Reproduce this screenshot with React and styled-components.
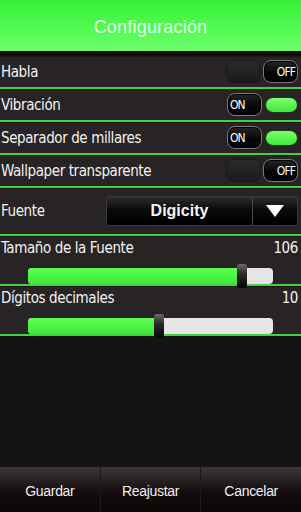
import React from 'react';
import styled, { createGlobalStyle } from 'styled-components';

const GlobalStyle = createGlobalStyle`
  html, body {
    margin: 0;
    padding: 0;
    background: #141414;
  }
  * {
    box-sizing: border-box;
  }
`

const Screen = styled.div`
  width: 301px;
  height: 512px;
  display: flex;
  flex-direction: column;
  background: #141414;
  font-family: "DejaVu Sans Condensed", "Liberation Sans", sans-serif;
  color: #fff;
  overflow: hidden;
`

const Header = styled.div`
  display: flex;
  align-items: center;
  justify-content: center;
  background: linear-gradient(#38f038, #5afb5a 70%, #70fc70);
  border-bottom: 5px solid #0c0c0c;
  height: 56px;
`

const Title = styled.div`
  font-family: "Liberation Sans", sans-serif;
  font-size: 18px;
  color: #e6ffe6;
  letter-spacing: 0.2px;
  padding-top: 3px;
`

const Row = styled.div`
  height: ${p => p.h}px;
  display: flex;
  align-items: ${p => (p.stack ? 'stretch' : 'center')};
  flex-direction: ${p => (p.stack ? 'column' : 'row')};
  justify-content: space-between;
  padding: 0 3px 0 1px;
  background: #282425;
  border-bottom: 2px solid #3fd43f;
  box-shadow: inset 0 1px 0 #1a1718;
`

const Label = styled.span`
  font-size: 15px;
  letter-spacing: -0.4px;
  color: #f2f2f2;
`

const Toggle = styled.div`
  display: flex;
  align-items: center;
  gap: 2px;
`

const Knob = styled.div`
  width: 35px;
  height: 23px;
  border-radius: 8px;
  background: linear-gradient(#262626, #050505 60%);
  border: 1.5px solid #7a7a7a;
  box-shadow: inset 0 0 0 1px #000;
  display: flex;
  align-items: center;
  justify-content: ${p => (p.on ? 'flex-start' : 'flex-end')};
  padding: 0 2px;
  font-size: 12px;
  letter-spacing: -0.9px;
  color: #fff;
`

const Dim = styled.div`
  width: 35px;
  height: 23px;
  border-radius: 8px;
  background: linear-gradient(#2c2a2a, #1c1a1a);
  border: 1px solid #1a1818;
`

const GreenPill = styled.div`
  width: 31px;
  height: 14px;
  margin: 0 1px 0 2px;
  border-radius: 7px;
  background: linear-gradient(#7bff6b, #3ee83a);
  box-shadow: 0 0 0 1px #1c3a1c;
`

const Select = styled.div`
  width: 192px;
  height: 30px;
  display: flex;
  background: linear-gradient(#2e2e2e, #0a0a0a 45%, #000);
  border: 1px solid #3a3a3a;
  border-radius: 2px;
`

const SelectText = styled.div`
  flex: 1;
  display: flex;
  align-items: center;
  justify-content: center;
  font-family: "Liberation Sans", sans-serif;
  font-weight: bold;
  font-size: 16px;
  color: #f4f4f4;
`

const SelectArrow = styled.div`
  width: 45px;
  display: flex;
  align-items: center;
  justify-content: center;
  border-left: 1px solid #4a4a4a;
`

const SliderHead = styled.div`
  display: flex;
  justify-content: space-between;
  align-items: center;
  height: 22px;
  margin-top: 1px;
`

const Track = styled.div`
  position: relative;
  margin: 5px 0 0 27px;
  width: 245px;
  height: 16px;
  border-radius: 4px;
  background: #e6e4e4;
`

const Fill = styled.div`
  height: 100%;
  border-radius: 4px 0 0 4px;
  background: linear-gradient(#5cff52, #3de83a);
`

const Thumb = styled.div`
  position: absolute;
  top: -4px;
  width: 10px;
  height: 24px;
  border-radius: 3px;
  background: linear-gradient(#6a6a6a, #2a2a2a 40%, #050505);
  transform: translateX(-5px);
`

const Spacer = styled.div`
  flex: 1;
`

const Footer = styled.div`
  height: 45px;
  display: flex;
  background: linear-gradient(#3d3738, #2a2526 25%, #150c0d 55%, #0e0708);
`

const FootButton = styled.div`
  flex: 1;
  display: flex;
  align-items: center;
  justify-content: center;
  padding-top: 3px;
  font-family: "Liberation Sans", sans-serif;
  font-size: 14px;
  letter-spacing: -0.3px;
  color: #f0f0f0;
  border-left: ${p => (p.first ? 'none' : '1px solid #201a1b')};
`

const ToggleSwitch = ({ on }) => (
  <Toggle>
    {on ? (
      <>
        <Knob on>ON</Knob>
        <GreenPill />
      </>
    ) : (
      <>
        <Dim />
        <Knob>OFF</Knob>
      </>
    )}
  </Toggle>
)

const Slider = ({ label, value, pct }) => (
  <Row h={50} stack>
    <SliderHead>
      <Label>{label}</Label>
      <Label>{value}</Label>
    </SliderHead>
    <Track>
      <Fill style={{ width: pct + '%' }} />
      <Thumb style={{ left: pct + '%' }} />
    </Track>
  </Row>
)

const toggles = [
  { label: 'Habla', on: false },
  { label: 'Vibración', on: true },
  { label: 'Separador de millares', on: true },
  { label: 'Wallpaper transparente', on: false },
]

export default function App() {
  return (
    <Screen>
      <GlobalStyle />
      <Header>
        <Title>Configuración</Title>
      </Header>
      {toggles.map(t => (
        <Row key={t.label} h={33}>
          <Label>{t.label}</Label>
          <ToggleSwitch on={t.on} />
        </Row>
      ))}
      <Row h={48}>
        <Label>Fuente</Label>
        <Select>
          <SelectText>Digicity</SelectText>
          <SelectArrow>
            <svg width="20" height="14" viewBox="0 0 20 14">
              <polygon points="1,1 19,1 10,13" fill="#fff" />
            </svg>
          </SelectArrow>
        </Select>
      </Row>
      <Slider label="Tamaño de la Fuente" value="106" pct={87.4} />
      <Slider label="Dígitos decimales" value="10" pct={53.5} />
      <Spacer />
      <Footer>
        <FootButton first>Guardar</FootButton>
        <FootButton>Reajustar</FootButton>
        <FootButton>Cancelar</FootButton>
      </Footer>
    </Screen>
  )
}
